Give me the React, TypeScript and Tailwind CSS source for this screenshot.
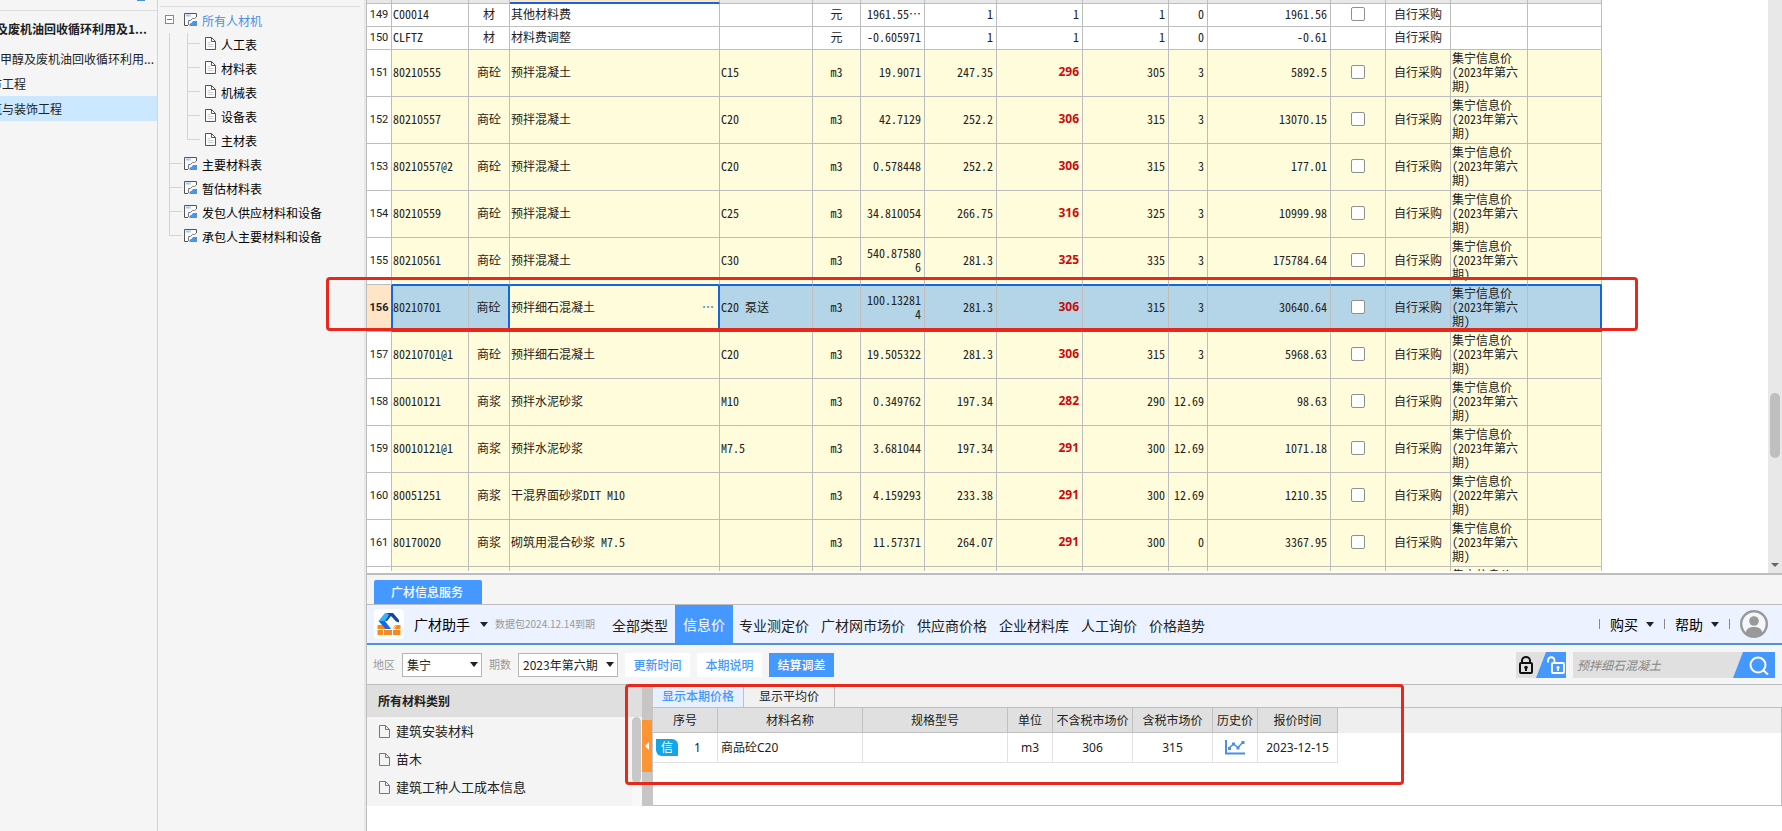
import React from "react";

const UI = "font-['Noto_Sans_CJK_SC',sans-serif]";

type Row = {
  no: number | "";
  code: string;
  kind: string;
  name: string;
  spec?: string;
  unit: string;
  qty: string;
  budget: string;
  market: string;
  taxed: string;
  rate: string;
  total: string;
  check?: boolean;
  source?: string;
};

const rows: Row[] = [
  { no: 149, code: "C00014", kind: "材", name: "其他材料费", unit: "元", qty: "1961.55⋯", budget: "1", market: "1", taxed: "1", rate: "0", total: "1961.56", check: true },
  { no: 150, code: "CLFTZ", kind: "材", name: "材料费调整", unit: "元", qty: "-0.605971", budget: "1", market: "1", taxed: "1", rate: "0", total: "-0.61" },
  { no: 151, code: "80210555", kind: "商砼", name: "预拌混凝土", spec: "C15", unit: "m3", qty: "19.9071", budget: "247.35", market: "296", taxed: "305", rate: "3", total: "5892.5", check: true, source: "2023" },
  { no: 152, code: "80210557", kind: "商砼", name: "预拌混凝土", spec: "C20", unit: "m3", qty: "42.7129", budget: "252.2", market: "306", taxed: "315", rate: "3", total: "13070.15", check: true, source: "2023" },
  { no: 153, code: "80210557@2", kind: "商砼", name: "预拌混凝土", spec: "C20", unit: "m3", qty: "0.578448", budget: "252.2", market: "306", taxed: "315", rate: "3", total: "177.01", check: true, source: "2023" },
  { no: 154, code: "80210559", kind: "商砼", name: "预拌混凝土", spec: "C25", unit: "m3", qty: "34.810054", budget: "266.75", market: "316", taxed: "325", rate: "3", total: "10999.98", check: true, source: "2023" },
  { no: 155, code: "80210561", kind: "商砼", name: "预拌混凝土", spec: "C30", unit: "m3", qty: "540.875806", budget: "281.3", market: "325", taxed: "335", rate: "3", total: "175784.64", check: true, source: "2023" },
  { no: 156, code: "80210701", kind: "商砼", name: "预拌细石混凝土", spec: "C20 泵送", unit: "m3", qty: "100.132814", budget: "281.3", market: "306", taxed: "315", rate: "3", total: "30640.64", check: true, source: "2023" },
  { no: 157, code: "80210701@1", kind: "商砼", name: "预拌细石混凝土", spec: "C20", unit: "m3", qty: "19.505322", budget: "281.3", market: "306", taxed: "315", rate: "3", total: "5968.63", check: true, source: "2023" },
  { no: 158, code: "80010121", kind: "商浆", name: "预拌水泥砂浆", spec: "M10", unit: "m3", qty: "0.349762", budget: "197.34", market: "282", taxed: "290", rate: "12.69", total: "98.63", check: true, source: "2023" },
  { no: 159, code: "80010121@1", kind: "商浆", name: "预拌水泥砂浆", spec: "M7.5", unit: "m3", qty: "3.681044", budget: "197.34", market: "291", taxed: "300", rate: "12.69", total: "1071.18", check: true, source: "2023" },
  { no: 160, code: "80051251", kind: "商浆", name: "干混界面砂浆DIT M10", unit: "m3", qty: "4.159293", budget: "233.38", market: "291", taxed: "300", rate: "12.69", total: "1210.35", check: true, source: "2022" },
  { no: 161, code: "80170020", kind: "商浆", name: "砌筑用混合砂浆 M7.5", unit: "m3", qty: "11.57371", budget: "264.07", market: "291", taxed: "300", rate: "0", total: "3367.95", check: true, source: "2023" },
];

const nextRow: Row = { no: "", code: "", kind: "", name: "", unit: "", qty: "", budget: "", market: "", taxed: "", rate: "", total: "", source: "2023" };

function SheetIcon() {
  return (
    <svg width="13" height="13" viewBox="0 0 13 13" fill="none" aria-hidden="true">
      <path d="M.5.5h12v12H.5z" fill="#fafafa" />
      <path d="M12.500 4V.5H.5v12H4" stroke="#555" />
      <path d="M2 2.500h4.500" stroke="#9cc8f2" strokeWidth="2" />
      <path d="M4.500 12V7.500h2l2-2h2l2-1.500" stroke="#777" />
      <path d="M5.500 13v-2l2.500-1.500 1-1.500h4v5z" fill="#4a94ea" />
    </svg>
  );
}

function DocIcon({ lines = true }: { lines?: boolean }) {
  return (
    <svg width="11" height="13" viewBox="0 0 11 13" fill="none" aria-hidden="true">
      <path d="M.5.5h6l4 4v8H.5z" fill={lines ? "#fff" : "none"} stroke={lines ? "#555" : "#777"} />
      <path d="M6.500.5v4h4" stroke={lines ? "#555" : "#777"} />
      {lines && <path d="M2.500 5.500h3M2.500 7.500h6M2.500 9.500h6" stroke="#ccc" />}
    </svg>
  );
}

function Caret() {
  return (
    <svg width="8" height="5" viewBox="0 0 8 5" aria-hidden="true">
      <path d="M0 0h8L4 5z" fill="#222" />
    </svg>
  );
}

function ProjectPanel() {
  return (
    <aside className="w-[158px] shrink-0 overflow-hidden border-r border-[#d4d4d4] text-xs whitespace-nowrap text-[#222]">
      <div className="flex h-[11px] justify-end border-b border-[#dcdcdc] pr-3">
        <span className="h-px w-2 bg-[#4a90e2]" />
      </div>
      <div className="-ml-1 flex h-9 items-center font-bold">及废机油回收循环利用及1...</div>
      <div className="flex h-6 items-center">甲醇及废机油回收循环利用...</div>
      <div className="-ml-2.5 flex h-[25px] items-center">市工程</div>
      <div className="flex h-[25px] items-center bg-[#cce8ff]">
        <span className="-ml-2.5">筑与装饰工程</span>
      </div>
    </aside>
  );
}

const subTables = ["人工表", "材料表", "机械表", "设备表", "主材表"];
const mainTables = ["主要材料表", "暂估材料表", "发包人供应材料和设备", "承包人主要材料和设备"];

function Branch({ last }: { last: boolean }) {
  return (
    <svg width="13" height="24" viewBox="0 0 13 24" fill="none" aria-hidden="true">
      <path d={last ? "M.5 0V10.500H13" : "M.5 0V24M.5 10.500H13"} stroke="#f5cf96" />
    </svg>
  );
}

function TreePanel() {
  return (
    <nav className="w-[208px] shrink-0 border-r-2 border-[#e8e8e8] pt-1.5 text-xs text-black">
      <div className="mr-1 ml-0.5 border-t border-[#dcdcdc]" />
      <ul className="pt-0.5 pl-[7px]">
        <li className="flex h-6 text-[#4a90e2]">
          <button aria-label="收起" className="mt-1.5 mr-2.5 flex size-[9px] items-center justify-center border border-[#888] bg-white">
            <span className="h-px w-[5px] bg-[#2a8ad4]" />
          </button>
          <span className="pt-1">
            <SheetIcon />
          </span>
          <span className="ml-[5px] pt-1">所有人材机</span>
        </li>
        {subTables.map((t, i) => (
          <li key={t} className="flex h-6 pl-1">
            <span className="h-6 w-[18px] border-l border-[#f5cf96]" />
            <Branch last={i === subTables.length - 1} />
            <span className="ml-[5px] pt-1">
              <DocIcon />
            </span>
            <span className="ml-[5px] pt-1">{t}</span>
          </li>
        ))}
        {mainTables.map((t, i) => (
          <li key={t} className="flex h-6 pl-1">
            <Branch last={i === mainTables.length - 1} />
            <span className="ml-0.5 pt-1">
              <SheetIcon />
            </span>
            <span className="ml-[5px] pt-1">{t}</span>
          </li>
        ))}
      </ul>
    </nav>
  );
}

function GridRow({ row }: { row: Row }) {
  const selected = row.no === 156;
  const tall = Boolean(row.source);
  const bg = selected ? "bg-[#b4d4e7]" : tall ? "bg-[#fffcdb]" : "bg-white";
  const edge = selected
    ? "border-t border-b-2 border-t-[#1266e0] border-b-[#c8303f]"
    : row.no === 155
      ? "border-b border-b-[#1266e0]"
      : "border-b border-b-[#bdbdbd]";
  const plain = `${bg} ${edge} p-0 pb-0.5`;
  const cell = `${plain} border-r border-r-[#bdbdbd]`;
  const blueCell = `${plain} border-r-2 border-r-[#1266e0]`;
  return (
    <tr className={tall ? "h-[47px]" : "h-[23px]"}>
      <td
        className={`border-r border-b border-b-[#bdbdbd] p-0 text-center font-[Roboto,sans-serif] text-[11px] ${
          selected ? "border-r-[#1266e0] bg-[#ffe4c6] text-xs font-bold" : "border-r-[#bdbdbd] bg-white"
        }`}
      >
        {row.no}
      </td>
      <td className={`${cell} ${selected ? "border-l border-l-[#1266e0]" : "pl-px"}`}>{row.code}</td>
      <td className={`${selected ? blueCell : cell} text-center`}>{row.kind}</td>
      {selected ? (
        <td className="border-t border-r-2 border-b-2 border-t-[#1266e0] border-r-[#1266e0] border-b-[#c8303f] bg-[#fffcdb] p-0 pr-1 pb-0.5 pl-px">
          <div className="flex items-center justify-between">
            {row.name}
            <button aria-label="更多" className="font-bold text-[#5b95c8]">
              ⋯
            </button>
          </div>
        </td>
      ) : (
        <td className={`${cell} pl-px`}>{row.name}</td>
      )}
      <td className={`${cell} pl-px`}>{row.spec}</td>
      <td className={`${cell} text-center`}>{row.unit}</td>
      <td className={`${cell} pr-[3px] pl-1 text-right break-all`}>{row.qty}</td>
      <td className={`${cell} pr-[3px] text-right`}>{row.budget}</td>
      <td className={`${cell} pr-[3px] text-right ${tall ? "font-['Open_Sans',sans-serif] font-bold text-[#cc0a0a]" : ""}`}>{row.market}</td>
      <td className={`${cell} pr-[3px] text-right`}>{row.taxed}</td>
      <td className={`${cell} pr-[3px] text-right`}>{row.rate}</td>
      <td className={`${cell} pr-[3px] text-right`}>{row.total}</td>
      <td className={cell}>
        {row.check && (
          <input
            type="checkbox"
            aria-label={`${row.code} ${row.name}`}
            className="mx-auto block size-3.5 appearance-none rounded-xs border border-[#8f8f8f] bg-white"
          />
        )}
      </td>
      <td className={`${cell} text-center`}>{row.code && "自行采购"}</td>
      <td className={`${cell} pl-px`}>
        {row.source && (
          <>
            集宁信息价
            <br />({row.source}年第六
            <br />
            期)
          </>
        )}
      </td>
      <td className={selected ? blueCell : cell}></td>
    </tr>
  );
}

function Grid() {
  return (
    <div className="flex min-h-0 flex-1 bg-white">
      <div className="min-w-0 flex-1 overflow-hidden pb-0.5">
        <div className="h-full overflow-hidden">
          <table className="w-[1235px] table-fixed border-separate border-spacing-0 font-['Noto_Sans_Mono_CJK_SC','Noto_Sans_CJK_SC',monospace] text-xs leading-[14px] text-[#222]">
            <colgroup>
              <col className="w-[25px]" />
              <col className="w-[77px]" />
              <col className="w-[41px]" />
              <col className="w-[210px]" />
              <col className="w-[93px]" />
              <col className="w-[48px]" />
              <col className="w-[64px]" />
              <col className="w-[72px]" />
              <col className="w-[86px]" />
              <col className="w-[86px]" />
              <col className="w-[39px]" />
              <col className="w-[123px]" />
              <col className="w-[55px]" />
              <col className="w-[65px]" />
              <col className="w-[77px]" />
              <col className="w-[74px]" />
            </colgroup>
            <thead>
              <tr className="h-1">
                {Array.from({ length: 16 }, (_, i) => (
                  <th
                    key={i}
                    className={
                      i === 3
                        ? "border-r border-b-2 border-r-[#bdbdbd] border-b-[#1266e0] bg-[#ffe4c6] p-0"
                        : "border-r border-b border-[#bdbdbd] bg-[#e8e8e8] p-0"
                    }
                  />
                ))}
              </tr>
            </thead>
            <tbody>
              {rows.map((r) => (
                <GridRow key={r.no} row={r} />
              ))}
              <GridRow row={nextRow} />
            </tbody>
          </table>
        </div>
      </div>
      <div className="relative w-3.5 shrink-0 bg-[#e8e8e8]">
        <div className="absolute top-[393px] right-0.5 left-0.5 h-[65px] rounded-full bg-[#bfbfbf]" />
        <svg className="absolute bottom-1.5 left-[3px]" width="8" height="4" viewBox="0 0 8 4" aria-hidden="true">
          <path d="M0 0h8L4 4z" fill="#666" />
        </svg>
      </div>
    </div>
  );
}

function Logo() {
  return (
    <svg width="30" height="30" viewBox="0 0 30 30" aria-hidden="true">
      <rect width="30" height="30" rx="4" fill="#fff" />
      <path d="M3.500 16H9l5 5h4l3-5h5.500v10h-23z" fill="#f58a1f" />
      <path d="M3 20.500h24M9.500 20.500V26M18.500 20.500V26M22 16.500l-3 4" stroke="#fff" />
      <path d="M11 4h6l-6 8H4.500z" fill="#35b3f7" />
      <path d="M4.500 12H11l6 8h-5.500z" fill="#1768ea" />
      <path d="M13 4h6l6 7v2.500l-3-1L17 7l-4 5-2 0 4-6z" fill="#14479f" />
    </svg>
  );
}

const navAfter = ["专业测定价", "广材网市场价", "供应商价格", "企业材料库", "人工询价", "价格趋势"];

function ServiceHeader() {
  return (
    <header className="flex h-10 items-center border-b-2 border-[#5492d8] bg-[#ecf2ff] pl-[7px] text-sm whitespace-nowrap text-[#222]">
      <Logo />
      <button className="ml-2.5 flex items-center gap-2.5 text-black">
        广材助手
        <Caret />
      </button>
      <span className="ml-[7px] text-[10px] text-[#999]">数据包2024.12.14到期</span>
      <nav className="ml-[17px] flex items-center self-stretch pt-px">
        <a href="#all">全部类型</a>
        <a href="#info" className="-mt-px mr-1.5 ml-[7px] flex items-center self-stretch bg-[#4598ff] px-2 text-white">
          信息价
        </a>
        <div className="flex gap-3">
          {navAfter.map((t) => (
            <a key={t} href={`#${t}`}>
              {t}
            </a>
          ))}
        </div>
      </nav>
      <div className="mr-3.5 ml-auto flex items-center gap-2.5 text-black">
        <span className="h-2.5 w-px bg-[#888]" />
        <button className="flex items-center gap-2">
          购买
          <Caret />
        </button>
        <span className="h-2.5 w-px bg-[#888]" />
        <button className="flex items-center gap-2">
          帮助
          <Caret />
        </button>
        <span className="h-2.5 w-px bg-[#888]" />
        <button aria-label="用户">
          <svg width="28" height="28" viewBox="0 0 28 28" aria-hidden="true">
            <circle cx="14" cy="14" r="12.800" fill="#f4f6fb" stroke="#999" strokeWidth="2.400" />
            <circle cx="14" cy="11" r="4.800" fill="#999" />
            <path d="M5.500 23c1-4.500 4-6 8.500-6s7.500 1.500 8.500 6a12 12 0 0 1-17 0z" fill="#999" />
          </svg>
        </button>
      </div>
    </header>
  );
}

function Picker({ id, label, value, width }: { id: string; label: string; value: string; width: string }) {
  return (
    <div className="flex items-center gap-[7px]">
      <label htmlFor={id} className="text-[11px] text-[#999]">
        {label}
      </label>
      <div className={`relative ${width}`}>
        <select id={id} className="h-6 w-full appearance-none border border-[#b5b5b5] bg-white pl-1 text-xs text-[#222]">
          <option>{value}</option>
        </select>
        <span className="pointer-events-none absolute inset-y-0 right-1 flex items-center">
          <Caret />
        </span>
      </div>
    </div>
  );
}

function Toolbar() {
  return (
    <div className="flex h-10 items-center gap-[7px] border-b border-[#bdbdbd] bg-[#f5f5f5] pr-[7px] pl-1.5 text-xs">
      <Picker id="region" label="地区" value="集宁" width="w-20" />
      <Picker id="period" label="期数" value="2023年第六期" width="w-[100px]" />
      <button className="h-6 w-[65px] bg-white font-medium text-[#4598ff]">更新时间</button>
      <button className="h-6 w-[65px] bg-white font-medium text-[#4598ff]">本期说明</button>
      <button className="h-6 w-[65px] bg-[#4598ff] font-medium text-white">结算调差</button>
      <button aria-label="锁定" className="ml-auto">
        <svg width="50" height="26" viewBox="0 0 50 26" fill="none" aria-hidden="true">
          <path d="M0 0h50v26H0z" fill="#e0e0e0" />
          <path d="M30 0h20v26H20z" fill="#4598ff" />
          <rect x="4" y="11" width="12" height="10" rx="1" stroke="#111" strokeWidth="2" />
          <path d="M6 11V8.500a4 3.500 0 0 1 8 0V11M10 16v3" stroke="#111" strokeWidth="2" />
          <circle cx="10" cy="15.500" r="1.800" fill="#111" />
          <rect x="36" y="11" width="12" height="10" rx="1" stroke="#fff" strokeWidth="1.800" />
          <path d="M38.500 11V9c0-5-6.500-5-6.500 0v1.500M42 16v3" stroke="#fff" strokeWidth="1.800" />
          <circle cx="42" cy="15.500" r="1.600" fill="#fff" />
        </svg>
      </button>
      <div className="flex h-[26px] w-[202px] bg-[#e0e0e0]">
        <input aria-label="搜索材料" defaultValue="预拌细石混凝土" className="min-w-0 flex-1 bg-transparent pl-1 text-xs text-[#888] italic" />
        <button aria-label="搜索">
          <svg width="42" height="26" viewBox="0 0 42 26" fill="none" aria-hidden="true">
            <path d="M10 0h32v26H0z" fill="#4598ff" />
            <circle cx="25" cy="13" r="7.500" stroke="#fff" strokeWidth="2" />
            <path d="m30.500 18.500 4.500 4" stroke="#fff" strokeWidth="2" />
          </svg>
        </button>
      </div>
    </div>
  );
}

const categories = ["建筑安装材料", "苗木", "建筑工种人工成本信息"];

function Categories() {
  return (
    <aside className="flex w-[275px] shrink-0 flex-col bg-[#f4f4f4]">
      <h2 className="flex h-8 items-center bg-[#dfdfdf] pl-[11px] text-xs font-bold text-[#222]">所有材料类别</h2>
      <div className="flex flex-1">
        <ul className="flex-1 text-[13px] text-[#222]">
          {categories.map((c) => (
            <li key={c} className="flex h-7 items-center gap-1.5 pl-3">
              <DocIcon lines={false} />
              {c}
            </li>
          ))}
        </ul>
        <div className="w-2.5 bg-[#f8f8f8]">
          <div className="h-[66px] w-[9px] rounded-full bg-[#c8c8c8]" />
        </div>
      </div>
    </aside>
  );
}

const head = "border-r border-b border-[#c0c0c0] bg-[#e0e0e0] p-0 font-normal";
const body = "border-r border-b border-[#e2e2e2] bg-white p-0 text-center";

function Prices() {
  return (
    <section className="flex min-w-0 flex-1 flex-col bg-[#f1f1f1] text-xs text-[#222]">
      <div className="flex h-[22px]">
        <button className="w-[91px] border-r border-[#c0c0c0] bg-[#e6f0ff] font-medium text-[#4598ff]">显示本期价格</button>
        <button className="w-[91px] border-r border-[#c0c0c0]">显示平均价</button>
      </div>
      <div className="flex-1 border border-l-0 border-[#c0c0c0] bg-linear-to-b from-[#efefef] from-[25px] to-white to-[25px]">
        <table className="w-[685px] table-fixed border-separate border-spacing-0">
          <colgroup>
            <col className="w-[65px]" />
            <col className="w-[145px]" />
            <col className="w-[145px]" />
            <col className="w-[45px]" />
            <col className="w-[80px]" />
            <col className="w-[80px]" />
            <col className="w-[45px]" />
            <col className="w-[80px]" />
          </colgroup>
          <thead>
            <tr className="h-[25px]">
              {["序号", "材料名称", "规格型号", "单位", "不含税市场价", "含税市场价", "历史价", "报价时间"].map((h) => (
                <th key={h} className={head}>
                  {h}
                </th>
              ))}
            </tr>
          </thead>
          <tbody className="font-['Noto_Sans','Noto_Sans_CJK_SC',sans-serif]">
            <tr className="h-[30px]">
              <td className={body}>
                <div className="flex items-center gap-4 pl-[3px]">
                  <span className="flex h-[17px] w-[22px] items-center justify-center rounded-tr-md rounded-bl-md bg-[#12a5e8] text-white">信</span>
                  1
                </div>
              </td>
              <td className="border-r border-b border-[#e2e2e2] bg-white p-0 pl-[3px]">商品砼C20</td>
              <td className={body} />
              <td className={body}>m3</td>
              <td className={body}>306</td>
              <td className={body}>315</td>
              <td className={body}>
                <button aria-label="历史价" className="block w-full">
                  <svg className="mx-auto" width="20" height="15" viewBox="0 0 20 15" fill="none" aria-hidden="true">
                    <path d="M1 0v13.500h19" stroke="#4a90e2" strokeWidth="2" />
                    <path d="m4 8 4.500-4 4.500 3.500 5-5.500" stroke="#4a90e2" strokeWidth="1.500" />
                    <path d="M3 7h3v3H3zM7 2.500h3v3H7zM11.500 6.500h3v3h-3zM16.500 1h3v3h-3z" fill="#4a90e2" />
                  </svg>
                </button>
              </td>
              <td className={body}>2023-12-15</td>
            </tr>
          </tbody>
        </table>
      </div>
    </section>
  );
}

export default function App() {
  return (
    <div className={`relative flex h-screen overflow-hidden bg-[#f5f5f5] ${UI}`}>
      <ProjectPanel />
      <TreePanel />
      <main className="flex min-w-0 flex-1 flex-col border-l border-[#bdbdbd] bg-white">
        <Grid />
        <section className="mb-[25px] border-t-2 border-[#bdbdbd] bg-[#f5f5f5]">
          <div className="border-b border-[#bdbdbd] pt-[5px] pl-[7px]">
            <button className="block h-6 w-[108px] rounded-t-xs bg-[#4598ff] pr-0.5 text-xs font-medium text-white">广材信息服务</button>
          </div>
          <ServiceHeader />
          <Toolbar />
          <div className="flex h-[121px]">
            <Categories />
            <div className="flex w-[11px] shrink-0 bg-[#c8c6c4] pt-[35px]">
              <button aria-label="折叠" className="flex h-[52px] w-2.5 items-center justify-center bg-[#ff9433]">
                <svg width="4" height="8" viewBox="0 0 4 8" aria-hidden="true">
                  <path d="M4 0v8L0 4z" fill="#fff" />
                </svg>
              </button>
            </div>
            <Prices />
          </div>
        </section>
      </main>
      <div className="pointer-events-none absolute top-[277px] left-[326px] h-[54px] w-[1312px] rounded-sm border-3 border-[#e8281c]" />
      <div className="pointer-events-none absolute top-[684px] left-[625px] h-[101px] w-[779px] rounded-sm border-3 border-[#e8281c]" />
    </div>
  );
}
